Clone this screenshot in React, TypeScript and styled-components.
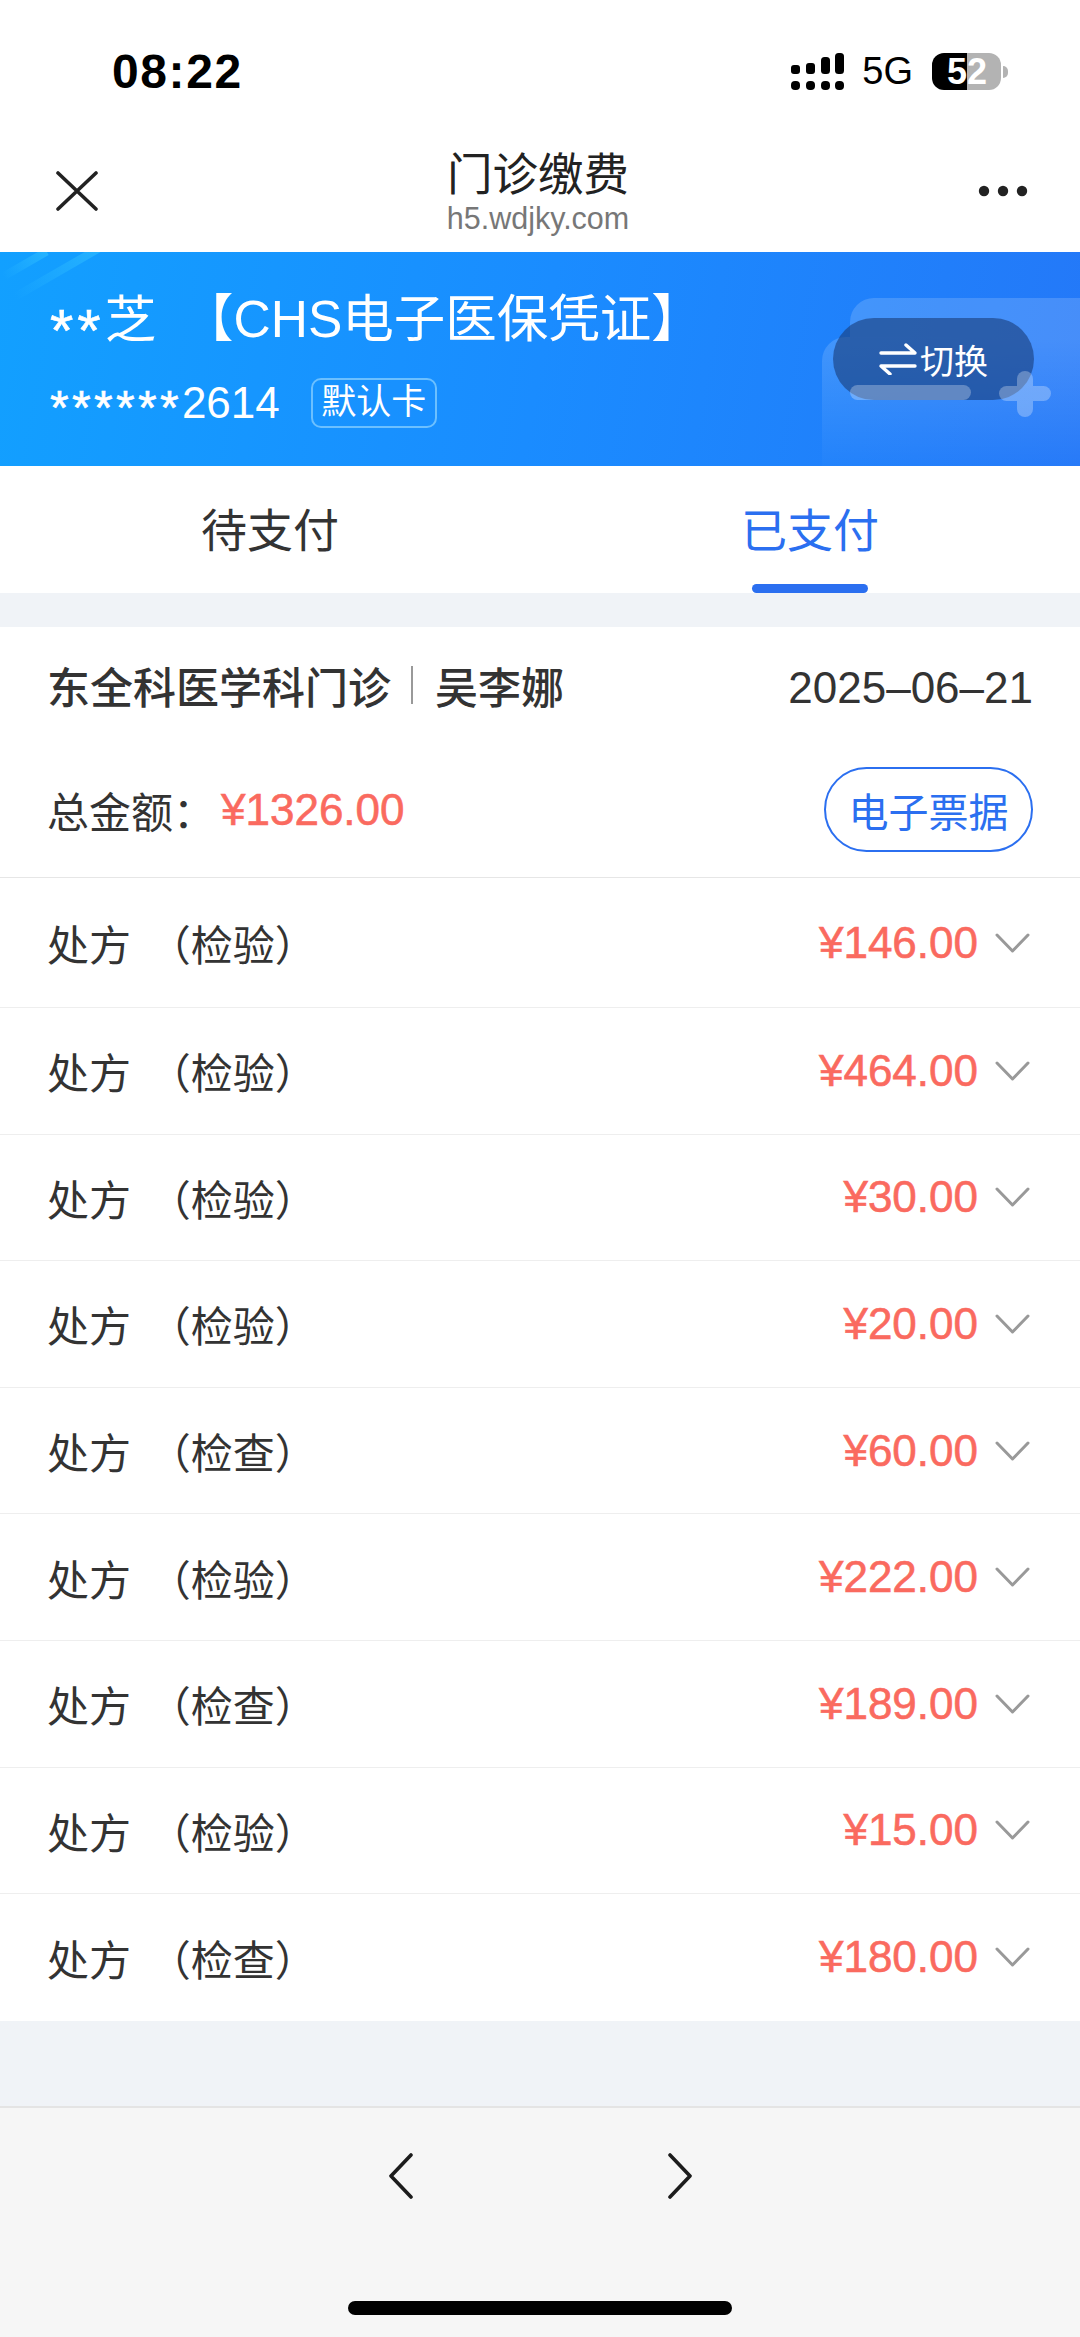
import React from "react"
import styled, { createGlobalStyle } from "styled-components"

const FONT = `"Liberation Sans", "Noto Sans CJK SC", sans-serif`
const RED = "#fa6a5f"
const BLUE = "#2b6ff0"

const GlobalStyle = createGlobalStyle`
    html, body {
        margin: 0;
        padding: 0;
        background: #ffffff;
        font-family: ${FONT};
    }
    * {
        box-sizing: border-box;
    }
`

const Page = styled.div`
    width: 1080px;
    height: 2337px;
    display: flex;
    flex-direction: column;
    background: #f0f3f7;
    overflow: hidden;
`

const StatusBar = styled.div`
    height: 122px;
    flex: none;
    padding: 21px 72px 0 112px;
    display: flex;
    align-items: center;
    justify-content: space-between;
    background: #fff;
`

const Time = styled.div`
    font-size: 48px;
    font-weight: 700;
    letter-spacing: 1.6px;
    color: #000;
`

const StatusRight = styled.div`
    display: flex;
    align-items: center;
`

const NetworkLabel = styled.div`
    font-size: 38px;
    color: #000;
    margin: 0 19px 0 18px;
`

const Battery = styled.div`
    width: 69px;
    height: 37px;
    display: flex;
    color: #fff;
    font-size: 36px;
    line-height: 37px;
    font-weight: 700;
`

const BatteryPart = styled.div<{ $filled?: boolean }>`
    width: ${(props) => (props.$filled ? 35 : 34)}px;
    height: 37px;
    display: flex;
    align-items: center;
    justify-content: ${(props) => (props.$filled ? "flex-end" : "flex-start")};
    border-radius: ${(props) => (props.$filled ? "12px 0 0 12px" : "0 12px 12px 0")};
    background: ${(props) => (props.$filled ? "#000" : "#b3b3b3")};
`

const BatteryNub = styled.div`
    width: 5px;
    height: 12px;
    margin-left: 2px;
    border-radius: 0 6px 6px 0;
    background: #b3b3b3;
`

const NavBar = styled.div`
    height: 130px;
    flex: none;
    padding: 8px 52px 0 56px;
    display: flex;
    align-items: center;
    justify-content: space-between;
    background: #fff;
`

const NavTitle = styled.div`
    display: flex;
    flex-direction: column;
    align-items: center;
    margin-top: 2px;
`

const TitleText = styled.div`
    font-size: 45.5px;
    line-height: 52px;
    color: #222;
`

const SubText = styled.div`
    font-size: 30.5px;
    line-height: 32px;
    color: #777;
`

const Banner = styled.div`
    position: relative;
    height: 214px;
    flex: none;
    padding: 38px 46px 0 50px;
    background: linear-gradient(100deg, #12a0ff 0%, #1a8cff 50%, #2478f8 100%);
    color: #fff;
    overflow: hidden;
`

const BannerStreak = styled.div<{ $left: number; $top: number; $length: number }>`
    position: absolute;
    left: ${(props) => props.$left}px;
    top: ${(props) => props.$top}px;
    width: ${(props) => props.$length}px;
    height: 8px;
    transform: rotate(-30deg);
    background: linear-gradient(90deg, rgba(60, 205, 255, 0), rgba(60, 205, 255, 0.45));
`

const BackCard = styled.div`
    position: absolute;
    left: 850px;
    top: 46px;
    width: 260px;
    height: 39px;
    border-radius: 24px 0 0 0;
    background: rgba(255, 255, 255, 0.16);
`

const FrontCard = styled.div`
    position: absolute;
    left: 822px;
    top: 85px;
    width: 280px;
    height: 140px;
    border-radius: 24px 0 0 0;
    background: linear-gradient(180deg, rgba(255, 255, 255, 0.16), rgba(255, 255, 255, 0));
`

const CardBar = styled.div`
    position: absolute;
    left: 850px;
    top: 133px;
    width: 121px;
    height: 15px;
    border-radius: 8px;
    background: rgba(255, 255, 255, 0.28);
`

const PlusMark = styled.svg`
    position: absolute;
    left: 999px;
    top: 119px;
    opacity: 0.28;
`

const BannerName = styled.div`
    position: relative;
    display: flex;
    align-items: center;
    font-size: 51.5px;
    line-height: 58px;
    height: 58px;
`

const NameMask = styled.span`
    width: 132px;
    flex: none;
`

const NameKind = styled.span`
    white-space: nowrap;
`

const Stars = styled.span<{ $size: number; $gap: number; $drop: number }>`
    display: inline-block;
    font-size: ${(props) => props.$size}px;
    letter-spacing: ${(props) => props.$gap}px;
    -webkit-text-stroke: 0.6px #fff;
    transform: translateY(${(props) => props.$drop}px);
`

const BannerCardRow = styled.div`
    position: relative;
    display: flex;
    align-items: center;
    margin-top: 29px;
`

const CardNumber = styled.div`
    font-size: 44px;
    line-height: 50px;
`

const DefaultBadge = styled.div`
    margin-left: 31px;
    width: 126px;
    height: 50px;
    border: 2px solid #6cc0ff;
    border-radius: 10px;
    font-size: 35px;
    line-height: 44px;
    text-align: center;
`

const SwitchButton = styled.div`
    position: absolute;
    left: 833px;
    top: 66px;
    width: 201px;
    height: 82px;
    border-radius: 41px;
    display: flex;
    align-items: center;
    justify-content: center;
    gap: 3px;
    background: rgba(25, 60, 120, 0.6);
    color: #fff;
    font-size: 34px;
`

const Tabs = styled.div`
    height: 127px;
    flex: none;
    display: flex;
    background: #fff;
`

const Tab = styled.div<{ $active?: boolean }>`
    position: relative;
    flex: 1;
    display: flex;
    align-items: center;
    justify-content: center;
    padding-bottom: 5px;
    font-size: 46px;
    color: ${(props) => (props.$active ? BLUE : "#333")};
    ${(props) =>
        props.$active &&
        `&::after {
            content: "";
            position: absolute;
            left: 212px;
            bottom: 0;
            width: 116px;
            height: 9px;
            border-radius: 5px;
            background: ${BLUE};
        }`}
`

const Card = styled.div`
    margin-top: 34px;
    flex: none;
    background: #fff;
`

const CardHeader = styled.div`
    height: 251px;
    padding: 0 47px;
    border-bottom: 1px solid #e6e6e6;
`

const HeaderLine = styled.div`
    height: 122px;
    display: flex;
    align-items: center;
    justify-content: space-between;
`

const Department = styled.div`
    display: flex;
    align-items: center;
    font-size: 43px;
    font-weight: 500;
    color: #333;
    transform: translateY(-3px);
`

const Separator = styled.span`
    width: 2px;
    height: 38px;
    margin: 0 22px 0 20px;
    background: #999;
`

const DateText = styled.div`
    font-size: 44px;
    color: #333;
`

const TotalLine = styled.div`
    height: 121px;
    display: flex;
    align-items: center;
    justify-content: space-between;
`

const TotalLabel = styled.div`
    display: flex;
    align-items: center;
    font-size: 42px;
    color: #333;
`

const TotalAmount = styled.span`
    margin-left: 6px;
    font-size: 44px;
    color: ${RED};
    -webkit-text-stroke: 0.6px ${RED};
`

const ReceiptButton = styled.div`
    width: 209px;
    height: 85px;
    border: 2.5px solid ${BLUE};
    border-radius: 43px;
    display: flex;
    align-items: center;
    justify-content: center;
    font-size: 40px;
    color: ${BLUE};
`

const RowList = styled.div`
    & > div:first-child {
        height: 130px;
    }
`

const Row = styled.div`
    height: 126.6px;
    padding: 0 50px 0 47px;
    display: flex;
    align-items: center;
    justify-content: space-between;
    border-bottom: 1px solid #eeeeee;
    &:last-child {
        border-bottom: none;
    }
`

const RowLabel = styled.div`
    font-size: 42px;
    word-spacing: 6px;
    color: #333;
    white-space: pre;
`

const RowRight = styled.div`
    display: flex;
    align-items: center;
    gap: 17px;
`

const RowAmount = styled.div`
    font-size: 44px;
    color: ${RED};
    -webkit-text-stroke: 0.6px ${RED};
`

const Spacer = styled.div`
    flex: 1;
`

const Footer = styled.div`
    height: 231px;
    flex: none;
    position: relative;
    border-top: 2px solid #e4e4e4;
    background: #f6f6f6;
`

const FooterNav = styled.div`
    padding: 45px 388px 0 389px;
    display: flex;
    justify-content: space-between;
`

const HomeBar = styled.div`
    position: absolute;
    left: 348px;
    bottom: 22px;
    width: 384px;
    height: 14px;
    border-radius: 7px;
    background: #000;
`

const rows = [
    { kind: "检验", amount: "146.00" },
    { kind: "检验", amount: "464.00" },
    { kind: "检验", amount: "30.00" },
    { kind: "检验", amount: "20.00" },
    { kind: "检查", amount: "60.00" },
    { kind: "检验", amount: "222.00" },
    { kind: "检查", amount: "189.00" },
    { kind: "检验", amount: "15.00" },
    { kind: "检查", amount: "180.00" },
]

const SignalIcon = () => (
    <svg width="53" height="37" viewBox="0 0 53 37" fill="#000">
        <rect x="0" y="12" width="9" height="9" rx="3" />
        <rect x="15" y="10" width="9" height="11" rx="3" />
        <rect x="30" y="4" width="9" height="17" rx="3.5" />
        <rect x="44" y="0" width="9" height="21" rx="3.5" />
        <rect x="0" y="28" width="9" height="9" rx="4" />
        <rect x="15" y="28" width="9" height="9" rx="4" />
        <rect x="30" y="28" width="9" height="9" rx="4" />
        <rect x="44" y="28" width="9" height="9" rx="4" />
    </svg>
)

const CloseIcon = () => (
    <svg width="42" height="40" viewBox="0 0 42 40" fill="none" stroke="#222" strokeWidth="3.6" strokeLinecap="round">
        <path d="M2 2L40 38M40 2L2 38" />
    </svg>
)

const MoreIcon = () => (
    <svg width="50" height="12" viewBox="0 0 50 12" fill="#222">
        <circle cx="6" cy="6" r="5.2" />
        <circle cx="25" cy="6" r="5.2" />
        <circle cx="44" cy="6" r="5.2" />
    </svg>
)

const SwapIcon = () => (
    <svg width="38" height="32" viewBox="0 0 38 32" fill="none" stroke="#fff" strokeWidth="3.4" strokeLinecap="round" strokeLinejoin="round">
        <path d="M2 10H36L27 2" />
        <path d="M36 23H2L11 31" />
    </svg>
)

const ChevronDown = () => (
    <svg width="35" height="20" viewBox="0 0 35 20" fill="none" stroke="#999" strokeWidth="3" strokeLinecap="round" strokeLinejoin="round">
        <path d="M2 2L17.5 18L33 2" />
    </svg>
)

const ChevronLeft = () => (
    <svg width="24" height="46" viewBox="0 0 24 46" fill="none" stroke="#1c1c1c" strokeWidth="3.6" strokeLinecap="round" strokeLinejoin="round">
        <path d="M22 2L2 23L22 44" />
    </svg>
)

const ChevronRight = () => (
    <svg width="24" height="46" viewBox="0 0 24 46" fill="none" stroke="#1c1c1c" strokeWidth="3.6" strokeLinecap="round" strokeLinejoin="round">
        <path d="M2 2L22 23L2 44" />
    </svg>
)

const App: React.FC = () => {
    return (
        <Page>
            <GlobalStyle />
            <StatusBar>
                <Time>08:22</Time>
                <StatusRight>
                    <SignalIcon />
                    <NetworkLabel>5G</NetworkLabel>
                    <Battery>
                        <BatteryPart $filled>5</BatteryPart>
                        <BatteryPart>2</BatteryPart>
                    </Battery>
                    <BatteryNub />
                </StatusRight>
            </StatusBar>
            <NavBar>
                <CloseIcon />
                <NavTitle>
                    <TitleText>门诊缴费</TitleText>
                    <SubText>h5.wdjky.com</SubText>
                </NavTitle>
                <MoreIcon />
            </NavBar>
            <Banner>
                <BannerStreak $left={8} $top={16} $length={100} />
                <BannerStreak $left={0} $top={8} $length={50} />
                <BackCard />
                <FrontCard />
                <BannerName>
                    <NameMask>
                        <Stars $size={60} $gap={4} $drop={13}>
                            **
                        </Stars>
                        芝
                    </NameMask>
                    <NameKind>【CHS电子医保凭证】</NameKind>
                </BannerName>
                <BannerCardRow>
                    <CardNumber>
                        <Stars $size={48} $gap={3.3} $drop={6}>
                            ******
                        </Stars>
                        2614
                    </CardNumber>
                    <DefaultBadge>默认卡</DefaultBadge>
                </BannerCardRow>
                <SwitchButton>
                    <SwapIcon />
                    切换
                </SwitchButton>
                <CardBar />
                <PlusMark width="52" height="46" viewBox="0 0 52 46" fill="#fff">
                    <rect x="0" y="15" width="52" height="15" rx="7.5" />
                    <rect x="18" y="0" width="16" height="46" rx="8" />
                </PlusMark>
            </Banner>
            <Tabs>
                <Tab>待支付</Tab>
                <Tab $active>已支付</Tab>
            </Tabs>
            <Card>
                <CardHeader>
                    <HeaderLine>
                        <Department>
                            东全科医学科门诊
                            <Separator />
                            吴李娜
                        </Department>
                        <DateText>2025–06–21</DateText>
                    </HeaderLine>
                    <TotalLine>
                        <TotalLabel>
                            总金额：
                            <TotalAmount>¥1326.00</TotalAmount>
                        </TotalLabel>
                        <ReceiptButton>电子票据</ReceiptButton>
                    </TotalLine>
                </CardHeader>
                <RowList>
                    {rows.map((row, index) => (
                        <Row key={index}>
                            <RowLabel>处方 （{row.kind}）</RowLabel>
                            <RowRight>
                                <RowAmount>¥{row.amount}</RowAmount>
                                <ChevronDown />
                            </RowRight>
                        </Row>
                    ))}
                </RowList>
            </Card>
            <Spacer />
            <Footer>
                <FooterNav>
                    <ChevronLeft />
                    <ChevronRight />
                </FooterNav>
                <HomeBar />
            </Footer>
        </Page>
    )
}

export default App
